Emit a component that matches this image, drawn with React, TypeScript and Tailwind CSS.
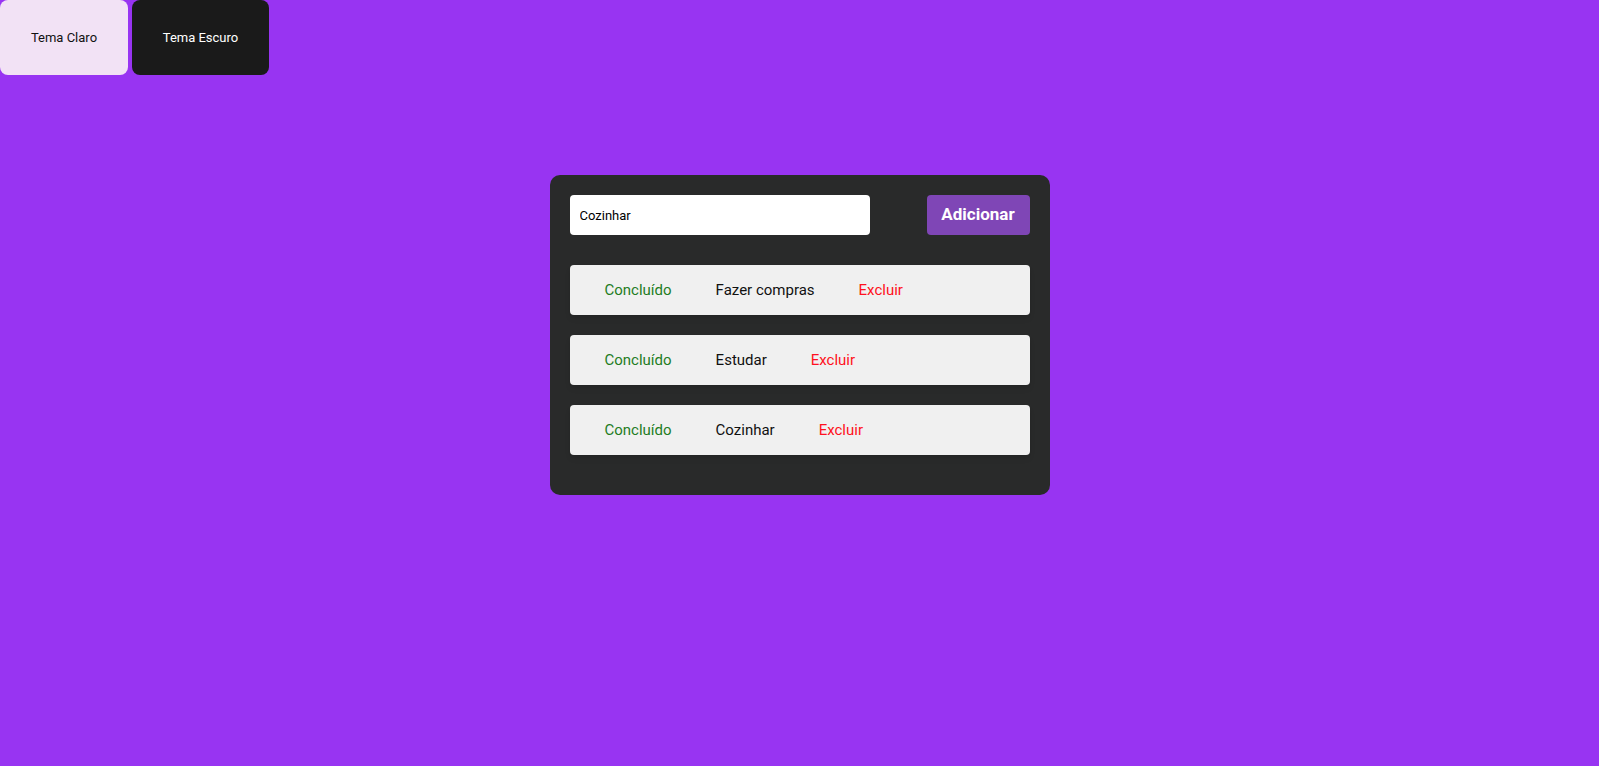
import { useState } from "react";

type Task = { id: number; text: string };

export default function App() {
  const [input, setInput] = useState("Cozinhar");
  const [tasks, setTasks] = useState<Task[]>([
    { id: 1, text: "Fazer compras" },
    { id: 2, text: "Estudar" },
    { id: 3, text: "Cozinhar" },
  ]);

  const addTask = () => {
    if (input.trim() === "") return;
    setTasks([...tasks, { id: Date.now(), text: input }]);
  };

  const removeTask = (id: number) => {
    setTasks(tasks.filter((t) => t.id !== id));
  };

  return (
    <div className="min-h-[766px] bg-[#9834f2] font-['Roboto',sans-serif]">
      <div className="flex gap-1">
        <button className="w-[128px] h-[75px] rounded-lg bg-[#f2e2f5] text-[13px] text-[#111]">
          Tema Claro
        </button>
        <button className="w-[137px] h-[75px] rounded-lg bg-[#1a1a1a] text-[13px] text-white">
          Tema Escuro
        </button>
      </div>

      <div className="mx-auto mt-[100px] w-[500px] rounded-[10px] bg-[#292a2a] p-5 pb-10">
        <div className="flex items-center justify-between">
          <input
            className="w-[300px] h-10 rounded bg-white px-[10px] text-[13px] text-black outline-none"
            type="text"
            value={input}
            onChange={(e) => setInput(e.target.value)}
          />
          <button
            className="w-[103px] h-10 rounded bg-[#7f46b6] text-[17px] font-bold text-white"
            onClick={addTask}
          >
            Adicionar
          </button>
        </div>

        <div className="mt-[30px] flex flex-col gap-5">
          {tasks.map((task) => (
            <div
              key={task.id}
              className="flex h-[50px] items-center gap-[44px] rounded bg-[#f0f0f0] pl-[35px] text-[15px] shadow-md"
            >
              <span className="text-[#1f7d1f]">Concluído</span>
              <span className="text-[#111]">{task.text}</span>
              <button
                className="text-[#ff1020]"
                onClick={() => removeTask(task.id)}
              >
                Excluir
              </button>
            </div>
          ))}
        </div>
      </div>
    </div>
  );
}
